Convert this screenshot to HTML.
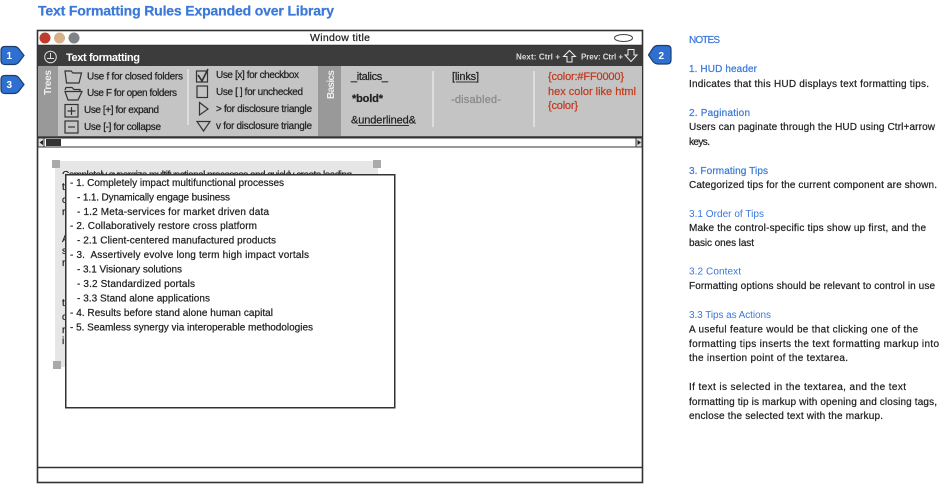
<!DOCTYPE html>
<html><head><meta charset="utf-8"><title>Text Formatting Rules</title>
<style>
html,body{margin:0;padding:0;background:#fff;width:950px;height:485px;overflow:hidden}
svg{display:block;position:absolute;left:0;top:0;filter:blur(.3px)}
text{font-family:"Liberation Sans",sans-serif;font-size:10px;fill:#222;stroke:#222;stroke-width:.22px}
.b{font-weight:bold}
.h{fill:#3b78d8;stroke:#3b78d8}
.r{fill:#c23a1e;stroke:#c23a1e;font-size:11px}
.w{fill:#fff;stroke:none}
.n{fill:#ddd;stroke:none;font-size:8px}
.l text{font-size:10px}
</style></head><body>
<svg width="950" height="485" viewBox="0 0 950 485" xmlns="http://www.w3.org/2000/svg">
<defs><clipPath id="c"><rect x="55" y="165" width="320" height="9"/></clipPath></defs>
<rect width="950" height="485" fill="#fff"/>
<text x="38" y="15.500" class="b h" style="font-size:14px" textLength="296" lengthAdjust="spacing">Text Formatting Rules Expanded over Library</text>

<!-- window -->
<rect x="37.500" y="30.500" width="605" height="452" fill="#fff" stroke="#333" stroke-width="1.600"/>
<line x1="38" y1="45.500" x2="642" y2="45.500" stroke="#333" stroke-width="1.500"/>
<circle cx="45" cy="38" r="5.500" fill="#bf3b2b"/><circle cx="59.500" cy="38" r="5.500" fill="#d9b08c"/><circle cx="74" cy="38" r="5.500" fill="#808285"/>
<text x="310" y="41" textLength="60" lengthAdjust="spacing" style="font-size:10.500px">Window title</text>
<ellipse cx="623.500" cy="38" rx="9" ry="3.500" fill="#fff" stroke="#444"/>

<!-- HUD -->
<rect x="38" y="46" width="604" height="20" fill="#3c3c3c"/>
<circle cx="50.500" cy="57" r="5.800" fill="none" stroke="#ddd"/><path d="M50.500 53V58M47 58.500H54" stroke="#ddd" fill="none"/>
<text x="66" y="61" class="b w" style="font-size:11px" textLength="74" lengthAdjust="spacing">Text formatting</text>
<text x="516" y="59.500" class="b n" textLength="44" lengthAdjust="spacing">Next: Ctrl +</text>
<path d="M563.500 56.500L569.500 50.500L575.500 56.500H572V62H567V56.500Z" fill="#3c3c3c" stroke="#eee"/>
<text x="581" y="59.500" class="b n" textLength="42" lengthAdjust="spacing">Prev: Ctrl +</text>
<path d="M628 49.500H634V55H637L631 61.500L625 55H628Z" fill="#3c3c3c" stroke="#eee"/>

<!-- panel -->
<rect x="38" y="66" width="604" height="71" fill="#c4c4c4"/>
<line x1="38" y1="137" x2="642" y2="137" stroke="#333" stroke-width="1.500"/>
<rect x="38" y="66" width="20" height="70" fill="#999"/>
<rect x="318" y="66" width="23" height="70" fill="#999"/>
<text transform="translate(51,95) rotate(-90)" class="b w" style="font-size:10px;fill:#eee" textLength="25" lengthAdjust="spacing">Trees</text>
<text transform="translate(334,99) rotate(-90)" class="b w" style="font-size:10px;fill:#eee" textLength="29" lengthAdjust="spacing">Basics</text>
<g fill="none" stroke="#ddd" stroke-width="2"><path d="M188 69V125M433 71V127M534 71V127"/></g>

<!-- trees icons -->
<g fill="none" stroke="#333" stroke-width="1.200">
<path d="M65 71H71L73 73H81.500L79 83H66.500Z"/><path d="M65 90L66 87.500H72L74 89.500H80V92"/><path d="M65 91.500H82L78 100H68Z"/>
<rect x="65" y="104.500" width="13" height="12.500"/><path d="M71.500 107V115M67.500 111H75.500"/>
<rect x="65" y="121" width="13" height="12"/><path d="M68 127H75"/>
<rect x="196.500" y="71" width="11" height="11"/><path d="M198 75L202 81L208 69" stroke-width="1.600"/>
<rect x="197" y="86" width="10.500" height="11.500"/>
<path d="M199.500 102.500L208 109L199.500 115Z"/><path d="M197 121.500H210L203.500 131Z"/>
</g>
<text x="87" y="79.500" textLength="96" lengthAdjust="spacing">Use f for closed folders</text>
<text x="87" y="96" textLength="90" lengthAdjust="spacing">Use F for open folders</text>
<text x="84" y="113" textLength="75" lengthAdjust="spacing">Use [+] for expand</text>
<text x="84" y="130" textLength="77" lengthAdjust="spacing">Use [-] for collapse</text>
<text x="216" y="78" textLength="83" lengthAdjust="spacing">Use [x] for checkbox</text>
<text x="216" y="95" textLength="87" lengthAdjust="spacing">Use [ ] for unchecked</text>
<text x="216" y="112" textLength="96" lengthAdjust="spacing">&gt; for disclosure triangle</text>
<text x="216" y="129" textLength="96" lengthAdjust="spacing">v for disclosure triangle</text>

<!-- basics -->
<text x="351" y="80" textLength="37" lengthAdjust="spacing" style="font-size:11px">_italics_</text>
<text x="352" y="102" class="b" textLength="31" lengthAdjust="spacing" style="font-size:11px">*bold*</text>
<text x="351" y="123.500" textLength="65" lengthAdjust="spacing" style="font-size:11px">&amp;underlined&amp;</text>
<line x1="358" y1="125.500" x2="409" y2="125.500" stroke="#333"/>
<text x="452" y="80" textLength="27" lengthAdjust="spacing" style="font-size:11px">[links]</text>
<line x1="456" y1="82" x2="476" y2="82" stroke="#333"/>
<text x="451" y="103" textLength="50" lengthAdjust="spacing" style="font-size:11px;fill:#888;stroke:#888">-disabled-</text>
<text x="548" y="80" class="r" textLength="76" lengthAdjust="spacing">{color:#FF0000}</text>
<text x="548" y="95" class="r" textLength="88" lengthAdjust="spacing">hex color like html</text>
<text x="548" y="109" class="r" textLength="30" lengthAdjust="spacing">{color}</text>

<!-- scrollbar -->
<rect x="38" y="138" width="604" height="9" fill="#fff" stroke="#333"/>
<rect x="38" y="138" width="6" height="9" fill="#ddd" stroke="#333"/><path d="M39.500 142.500L43 140V145Z" fill="#222"/>
<rect x="46" y="139" width="15" height="7" fill="#333"/>
<rect x="636" y="138" width="6" height="9" fill="#ddd" stroke="#333"/><path d="M641 142.500L637.500 140V145Z" fill="#222"/>

<!-- document -->
<rect x="55" y="161" width="323" height="13" fill="#e6e6e6"/>
<rect x="55" y="161" width="10" height="206" fill="#e6e6e6"/>
<rect x="52" y="160" width="8" height="8" fill="#aaa"/><rect x="373" y="160" width="8" height="8" fill="#aaa"/><rect x="53" y="361" width="8" height="8" fill="#aaa"/>
<text x="62" y="178" clip-path="url(#c)" textLength="290" lengthAdjust="spacing">Completely synergize multifunctional processes and quickly create leading</text>
<g><text x="62" y="190">t</text><text x="62" y="203">c</text><text x="62" y="215">r</text><text x="62" y="242">A</text><text x="62" y="254">s</text><text x="62" y="266">r</text><text x="62" y="306">t</text><text x="62" y="320">c</text><text x="62" y="333">r</text><text x="62" y="344">i</text></g>
<rect x="65.750" y="174.750" width="329" height="233" fill="#fff" stroke="#333" stroke-width="1.500"/>
<g class="l">
<text x="70" y="186" textLength="214" lengthAdjust="spacing">- 1. Completely impact multifunctional processes</text>
<text x="77" y="200.500" textLength="153" lengthAdjust="spacing">- 1.1. Dynamically engage business</text>
<text x="77" y="215" textLength="192" lengthAdjust="spacing">- 1.2 Meta-services for market driven data</text>
<text x="70" y="229" textLength="187" lengthAdjust="spacing">- 2. Collaboratively restore cross platform</text>
<text x="77" y="243.500" textLength="199" lengthAdjust="spacing">- 2.1 Client-centered manufactured products</text>
<text x="70" y="258" textLength="239" lengthAdjust="spacing" xml:space="preserve">- 3.  Assertively evolve long term high impact vortals</text>
<text x="77" y="272.500" textLength="105" lengthAdjust="spacing">- 3.1 Visionary solutions</text>
<text x="77" y="287" textLength="118" lengthAdjust="spacing">- 3.2 Standardized portals</text>
<text x="77" y="301.500" textLength="133" lengthAdjust="spacing">- 3.3 Stand alone applications</text>
<text x="70" y="316" textLength="203" lengthAdjust="spacing">- 4. Results before stand alone human capital</text>
<text x="70" y="330.500" textLength="243" lengthAdjust="spacing">- 5. Seamless synergy via interoperable methodologies</text>
</g>
<line x1="38" y1="467.500" x2="642" y2="467.500" stroke="#333" stroke-width="1.500"/>

<!-- badges -->
<g fill="#2f6fd0" stroke="#1d3d70" stroke-width="1.200">
<path d="M5 46.500H14Q17 46.500 19 49L24 55.500L19 62Q17 64.500 14 64.500H5Q1 64.500 1 60.500V50.500Q1 46.500 5 46.500Z"/>
<path d="M5 75.500H14Q17 75.500 19 78L24 84.500L19 91Q17 93.500 14 93.500H5Q1 93.500 1 89.500V79.500Q1 75.500 5 75.500Z"/>
<path d="M667 45.500H658Q655 45.500 653 48L648.500 55L653 61.500Q655 64 658 64H667Q671 64 671 60V49.500Q671 45.500 667 45.500Z"/>
</g>
<text x="6.500" y="59" class="b w">1</text><text x="6.500" y="88" class="b w">3</text><text x="658.500" y="59" class="b w">2</text>

<!-- notes -->
<text x="689" y="43" class="h" textLength="31" lengthAdjust="spacing">NOTES</text>
<text x="689" y="72" class="h" textLength="68" lengthAdjust="spacing">1. HUD header</text>
<text x="689" y="87" textLength="240" lengthAdjust="spacing">Indicates that this HUD displays text formatting tips.</text>
<text x="689" y="116" class="h" textLength="61" lengthAdjust="spacing">2. Pagination</text>
<text x="689" y="130" textLength="246" lengthAdjust="spacing">Users can paginate through the HUD using Ctrl+arrow</text>
<text x="689" y="145" textLength="21" lengthAdjust="spacing">keys.</text>
<text x="689" y="174" class="h" textLength="79" lengthAdjust="spacing">3. Formating Tips</text>
<text x="689" y="188" textLength="248" lengthAdjust="spacing">Categorized tips for the current component are shown.</text>
<text x="689" y="217" class="h" style="stroke:none" textLength="75" lengthAdjust="spacing">3.1 Order of Tips</text>
<text x="689" y="231" textLength="237" lengthAdjust="spacing">Make the control-specific tips show up first, and the</text>
<text x="689" y="246" textLength="65" lengthAdjust="spacing">basic ones last</text>
<text x="689" y="274.500" class="h" style="stroke:none" textLength="52" lengthAdjust="spacing">3.2 Context</text>
<text x="689" y="289" textLength="246" lengthAdjust="spacing">Formatting options should be relevant to control in use</text>
<text x="689" y="318" class="h" style="stroke:none" textLength="82" lengthAdjust="spacing">3.3 Tips as Actions</text>
<text x="689" y="332.500" textLength="229" lengthAdjust="spacing">A useful feature would be that clicking one of the</text>
<text x="689" y="347" textLength="250" lengthAdjust="spacing">formatting tips inserts the text formatting markup into</text>
<text x="689" y="361" textLength="159" lengthAdjust="spacing">the insertion point of the textarea.</text>
<text x="689" y="390" textLength="217" lengthAdjust="spacing">If text is selected in the textarea, and the text</text>
<text x="689" y="405" textLength="248" lengthAdjust="spacing">formatting tip is markup with opening and closing tags,</text>
<text x="689" y="419" textLength="194" lengthAdjust="spacing">enclose the selected text with the markup.</text>
</svg>
</body></html>
